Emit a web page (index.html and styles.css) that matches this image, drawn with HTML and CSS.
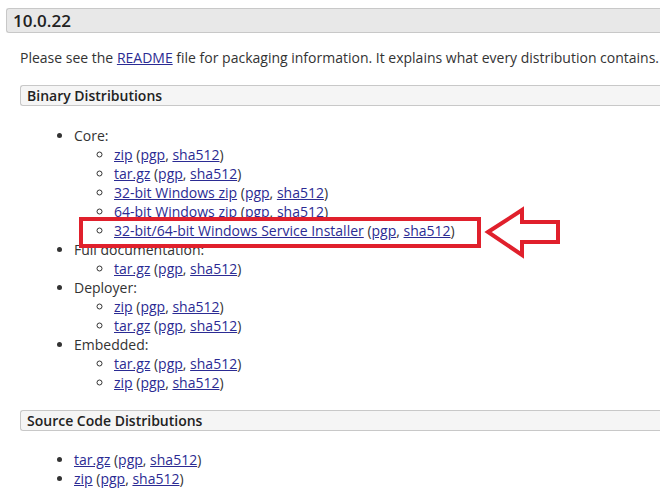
FILE: index.html
```html
<!DOCTYPE html>
<html>
<head>
<meta charset="utf-8">
<link rel="stylesheet" href="styles.css">
</head>
<body>
<div class="page">
  <h3 class="version">10.0.22</h3>
  <div class="section">
    <p class="intro">Please see the <a href="#">README</a> file for packaging information. It explains what every distribution contains.</p>
    <h4 class="sub">Binary Distributions</h4>
    <ul class="dist">
      <li>Core:
        <ul>
          <li><a href="#">zip</a> (<a href="#">pgp</a>, <a href="#">sha512</a>)</li>
          <li><a href="#">tar.gz</a> (<a href="#">pgp</a>, <a href="#">sha512</a>)</li>
          <li><a href="#">32-bit Windows zip</a> (<a href="#">pgp</a>, <a href="#">sha512</a>)</li>
          <li><a href="#">64-bit Windows zip</a> (<a href="#">pgp</a>, <a href="#">sha512</a>)</li>
          <li><a href="#">32-bit/64-bit Windows Service Installer</a> (<a href="#">pgp</a>, <a href="#">sha512</a>)</li>
        </ul>
      </li>
      <li>Full documentation:
        <ul>
          <li><a href="#">tar.gz</a> (<a href="#">pgp</a>, <a href="#">sha512</a>)</li>
        </ul>
      </li>
      <li>Deployer:
        <ul>
          <li><a href="#">zip</a> (<a href="#">pgp</a>, <a href="#">sha512</a>)</li>
          <li><a href="#">tar.gz</a> (<a href="#">pgp</a>, <a href="#">sha512</a>)</li>
        </ul>
      </li>
      <li>Embedded:
        <ul>
          <li><a href="#">tar.gz</a> (<a href="#">pgp</a>, <a href="#">sha512</a>)</li>
          <li><a href="#">zip</a> (<a href="#">pgp</a>, <a href="#">sha512</a>)</li>
        </ul>
      </li>
    </ul>
    <h4 class="sub">Source Code Distributions</h4>
    <ul class="dist dist-source">
      <li><a href="#">tar.gz</a> (<a href="#">pgp</a>, <a href="#">sha512</a>)</li>
      <li><a href="#">zip</a> (<a href="#">pgp</a>, <a href="#">sha512</a>)</li>
    </ul>
  </div>
</div>
<div class="highlight"></div>
<svg class="arrow" width="82" height="56" viewBox="0 0 82 56">
  <polygon points="4,26 38,4 38,16 74,16 74,36 38,36 38,49" fill="none" stroke="#e0202c" stroke-width="4" stroke-linejoin="miter"/>
</svg>
</body>
</html>
```
FILE: styles.css
```css
html, body {
  margin: 0;
  padding: 0;
  background: #fff;
}
body {
  font-family: "Open Sans", "Noto Sans", sans-serif;
  font-size: 14px;
  line-height: 19px;
  color: #333;
  width: 660px;
  height: 493px;
  overflow: hidden;
  position: relative;
}
.page {
  padding: 8px 0 0 6px;
}
.version {
  margin: 0;
  height: 23px;
  line-height: 23px;
  padding-left: 6px;
  font-size: 17px;
  font-weight: 600;
  color: #222;
  background: #e8e8e8;
  border: 1px solid #c8c8c8;
  border-right: none;
  border-radius: 3px 0 0 3px;
}
.section {
  padding-left: 14px;
}
.intro {
  margin: 15px 0 0 0;
  color: #333;
  white-space: nowrap;
}
a {
  color: #2b2b93;
  text-decoration: underline;
}
.sub {
  margin: 18px 0 0 0;
  height: 19px;
  line-height: 19px;
  padding-left: 6px;
  font-size: 14px;
  font-weight: 600;
  color: #222;
  background: #f5f5f5;
  border: 1px solid #c8c8c8;
  border-right: none;
  border-radius: 3px 0 0 3px;
}
.dist {
  margin: 20px 0 0 0;
  padding-left: 54px;
  list-style: disc;
}
.dist-source {
  margin-top: 19px;
}
.dist ul {
  margin: 0;
  padding-left: 40px;
  list-style: circle;
}
.highlight {
  position: absolute;
  left: 79px;
  top: 217px;
  width: 394px;
  height: 23px;
  border: 4px solid #e0202c;
}
.arrow {
  position: absolute;
  left: 484px;
  top: 206px;
}
```
